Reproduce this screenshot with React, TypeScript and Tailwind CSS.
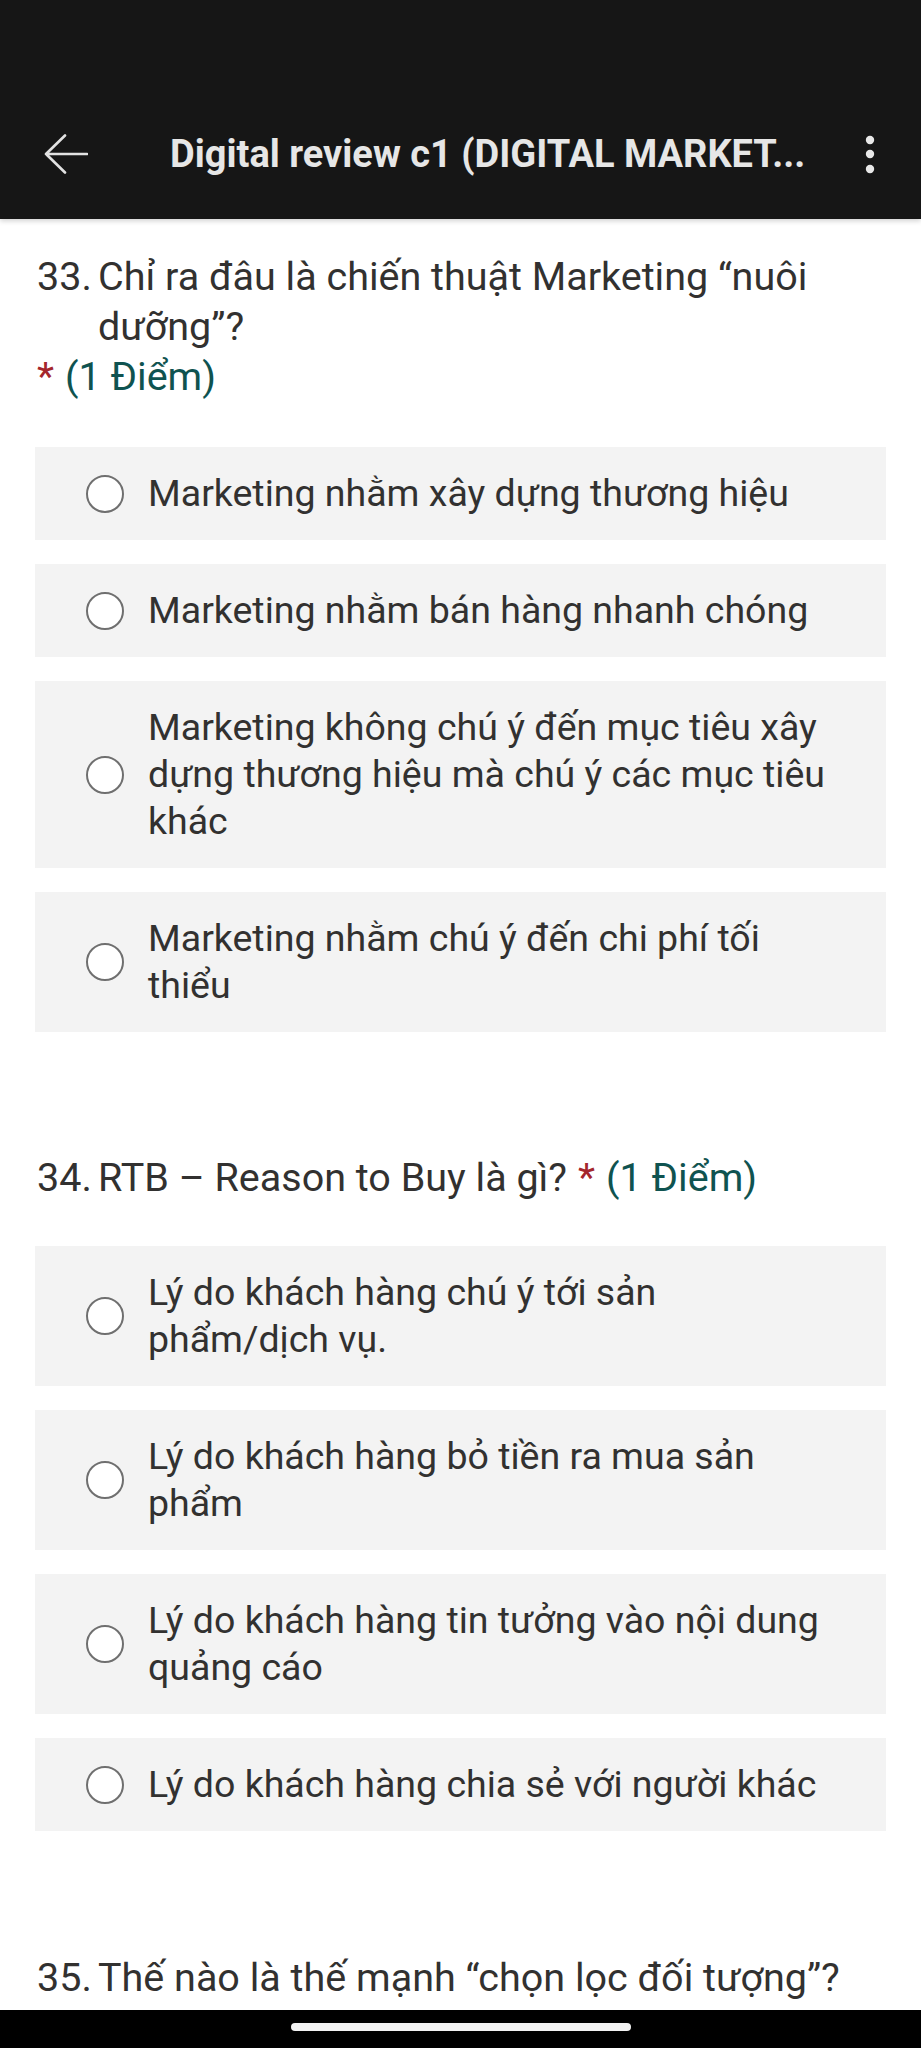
import React from 'react';

interface Question {
  num: string;
  title: string;
  options: string[];
}

const QUESTIONS: Question[] = [
  {
    num: '33.',
    title: 'Chỉ ra đâu là chiến thuật Marketing “nuôi dưỡng”?',
    options: [
      'Marketing nhằm xây dựng thương hiệu',
      'Marketing nhằm bán hàng nhanh chóng',
      'Marketing không chú ý đến mục tiêu xây dựng thương hiệu mà chú ý các mục tiêu khác',
      'Marketing nhằm chú ý đến chi phí tối thiểu',
    ],
  },
  {
    num: '34.',
    title: 'RTB – Reason to Buy là gì?',
    options: [
      'Lý do khách hàng chú ý tới sản phẩm/dịch vụ.',
      'Lý do khách hàng bỏ tiền ra mua sản phẩm',
      'Lý do khách hàng tin tưởng vào nội dung quảng cáo',
      'Lý do khách hàng chia sẻ với người khác',
    ],
  },
];

function QuestionTitle({ num, title }: { num: string; title: string }) {
  return (
    <div className="flex flex-wrap items-baseline gap-x-[11px] text-[39.5px] leading-[50px]">
      <div className="flex">
        <span className="w-[61px] shrink-0">{num}</span>
        <span>{title}</span>
      </div>
      <span className="text-[#a4262c]">*</span>
      <span className="text-[#0f5350]">(1 Điểm)</span>
    </div>
  );
}

function Option({ text }: { text: string }) {
  return (
    <div className="flex items-center bg-[#f3f3f3] pl-[51px] pr-[51px] py-[23px]">
      <div className="h-[38px] w-[38px] shrink-0 rounded-full border-[2.5px] border-[#6f6f6f] bg-white" />
      <div className="ml-[24px] text-[37.5px] leading-[47px]">{text}</div>
    </div>
  );
}

export default function App() {
  return (
    <div className="relative h-[2048px] overflow-hidden bg-white font-['Roboto',sans-serif] text-[#323130]">
      {/* Top bar */}
      <header className="h-[219px] bg-[#161616] pt-[124px] shadow-[0_2px_5px_rgba(0,0,0,0.18)]">
        <div className="flex h-[60px] items-center">
          <svg className="ml-[44px] shrink-0" width="44" height="40" viewBox="0 0 44 40" fill="none">
            <path d="M2 20H43M21 1.5L2 20L21 38.5" stroke="#e2e2e2" strokeWidth="2.6" strokeLinecap="round" strokeLinejoin="round" />
          </svg>
          <div className="ml-[82px] flex-1 truncate text-[38px] font-bold text-[#e6e6e6]">
            Digital review c1 (DIGITAL MARKET...
          </div>
          <svg className="ml-[20px] mr-[45px] shrink-0" width="12" height="40" viewBox="0 0 12 40">
            <circle cx="6" cy="6" r="4.2" fill="#e8e8e8" />
            <circle cx="6" cy="20" r="4.2" fill="#e8e8e8" />
            <circle cx="6" cy="35" r="4.2" fill="#e8e8e8" />
          </svg>
        </div>
      </header>

      <main className="px-[35px]">
        {QUESTIONS.map((q, i) => (
          <section key={q.num} className={i === 0 ? 'mt-[33px]' : 'mt-[121px]'}>
            <div className="px-[2px]">
              <QuestionTitle num={q.num} title={q.title} />
            </div>
            <div className={`${i === 0 ? 'mt-[45px]' : 'mt-[43px]'} flex flex-col gap-[24px]`}>
              {q.options.map((o) => (
                <Option key={o} text={o} />
              ))}
            </div>
          </section>
        ))}

        <section className="mt-[122px] px-[2px]">
          <div className="flex text-[39.5px] leading-[50px]">
            <span className="w-[61px] shrink-0">35.</span>
            <span>Thế nào là thế mạnh “chọn lọc đối tượng”?</span>
          </div>
        </section>
      </main>

      {/* Android nav bar */}
      <div className="absolute bottom-0 left-0 right-0 flex h-[38px] justify-center bg-black pt-[13px]">
        <div className="h-[8px] w-[340px] rounded-full bg-[#f2f2f2]" />
      </div>
    </div>
  );
}
